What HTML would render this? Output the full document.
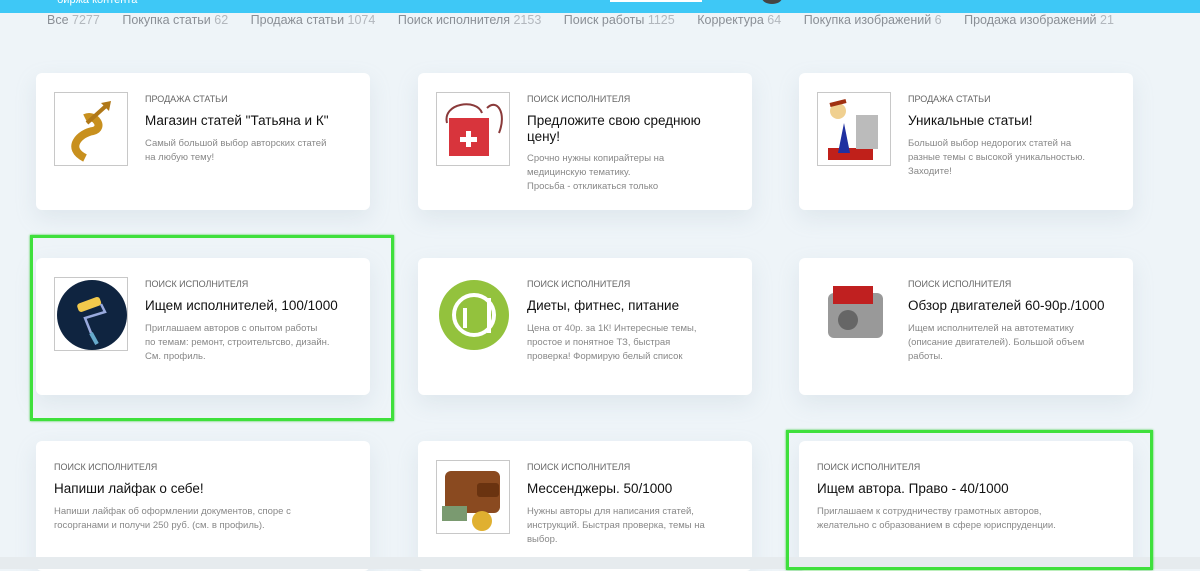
<!DOCTYPE html>
<html><head><meta charset="utf-8"><style>
*{margin:0;padding:0;box-sizing:border-box}
body{width:1200px;height:569px;overflow:hidden;background:#eef4f8;font-family:"Liberation Sans","DejaVu Sans",sans-serif;position:relative}
.top{position:absolute;left:0;top:0;width:1200px;height:13px;background:#3ec8f6}
.nav{position:absolute;top:13px;left:47px;font-size:12.5px;color:#8a8f96;white-space:nowrap}
.nav span{margin-right:22.5px}.nav b{font-weight:normal;color:#b2b7bd}
.card{position:absolute;width:334px;background:#fff;border-radius:6px;box-shadow:0 8px 22px rgba(150,170,190,.18)}
.img{position:absolute;left:18px;top:19px;width:74px;height:74px;border:1px solid #c8c8c8;background:#fff;overflow:hidden}
.t{position:absolute;left:109px;right:40px}
.cat{font-size:9px;color:#666;text-transform:uppercase;top:21px}
.ti{font-size:13.5px;color:#111;top:40px;line-height:16px;right:5px;white-space:nowrap}
.d{font-size:9.5px;color:#888;line-height:14px}
.g{position:absolute;border:3px solid #3fe03c;box-shadow:0 0 2px #3c3}
.bot{position:absolute;left:0;top:557px;width:1200px;height:12px;background:#e6ebee}
</style></head><body>
<div class="top"><span style="position:absolute;left:57px;top:-6px;color:#fff;font-size:11px">биржа контента</span><div style="position:absolute;left:610px;top:0;width:92px;height:2px;background:#fff"></div><div style="position:absolute;left:762px;top:-8px;width:20px;height:12px;border-radius:50%;background:#444"></div></div>
<div class="nav"><span>Все <b>7277</b></span><span>Покупка статьи <b>62</b></span><span>Продажа статьи <b>1074</b></span><span>Поиск исполнителя <b>2153</b></span><span>Поиск работы <b>1125</b></span><span>Корректура <b>64</b></span><span>Покупка изображений <b>6</b></span><span>Продажа изображений <b>21</b></span></div>

<div class="card" style="left:36px;top:73px;height:137px">
<div class="img"><svg width="74" height="74"><path d="M30 65 C10 55 25 40 38 38 C50 35 40 20 30 25" stroke="#c8901e" stroke-width="8" fill="none"/><path d="M32 30 L52 12" stroke="#b07818" stroke-width="4"/><path d="M46 10 L56 8 L54 18Z" fill="#b07818"/></svg></div>
<div class="t cat">Продажа статьи</div><div class="t ti">Магазин статей "Татьяна и К"</div><div class="t d" style="top:64px">Самый большой выбор авторских статей на любую тему!</div></div>

<div class="card" style="left:418px;top:73px;height:137px">
<div class="img"><svg width="74" height="74"><rect x="12" y="25" width="40" height="38" fill="#d8343c"/><rect x="29" y="38" width="5" height="16" fill="#fff"/><rect x="23" y="44" width="17" height="5" fill="#fff"/><path d="M10 30 C5 10 40 5 45 20 M50 15 C60 5 70 20 62 40" stroke="#8a3a3a" stroke-width="2" fill="none"/></svg></div>
<div class="t cat">Поиск исполнителя</div><div class="t ti">Предложите свою среднюю<br>цену!</div><div class="t d" style="top:79px">Срочно нужны копирайтеры на медицинскую тематику.<br>Просьба - откликаться только</div></div>

<div class="card" style="left:799px;top:73px;height:137px">
<div class="img"><svg width="74" height="74"><rect x="10" y="55" width="45" height="12" fill="#c0201a"/><rect x="38" y="22" width="22" height="34" fill="#bbb"/><path d="M20 60 L26 30 L32 60Z" fill="#2030a0"/><circle cx="20" cy="18" r="8" fill="#f0d090"/><path d="M12 12 L28 8" stroke="#a03010" stroke-width="4"/></svg></div>
<div class="t cat">Продажа статьи</div><div class="t ti">Уникальные статьи!</div><div class="t d" style="top:64px">Большой выбор недорогих статей на разные темы с высокой уникальностью. Заходите!</div></div>

<div class="card" style="left:36px;top:258px;height:137px">
<div class="img"><svg width="74" height="74"><circle cx="37" cy="37" r="35" fill="#0f2440"/><rect x="22" y="22" width="24" height="9" rx="3" fill="#f2c94c" transform="rotate(-20 34 26)"/><path d="M46 26 L50 34 L30 40 L36 55" stroke="#9ad" stroke-width="2.5" fill="none"/><path d="M36 55 L42 66" stroke="#6ac" stroke-width="4"/></svg></div>
<div class="t cat">Поиск исполнителя</div><div class="t ti">Ищем исполнителей, 100/1000</div><div class="t d" style="top:64px">Приглашаем авторов с опытом работы по темам: ремонт, строительтсво, дизайн. См. профиль.</div></div>

<div class="card" style="left:418px;top:258px;height:137px">
<div class="img" style="border-color:#fff"><svg width="74" height="74"><circle cx="37" cy="37" r="35" fill="#93c23d"/><circle cx="37" cy="37" r="20" fill="none" stroke="#fff" stroke-width="4"/><path d="M52 20 V55 M28 30 V50" stroke="#fff" stroke-width="4"/></svg></div>
<div class="t cat">Поиск исполнителя</div><div class="t ti">Диеты, фитнес, питание</div><div class="t d" style="top:64px">Цена от 40р. за 1К! Интересные темы, простое и понятное ТЗ, быстрая проверка! Формирую белый список</div></div>

<div class="card" style="left:799px;top:258px;height:137px">
<div class="img" style="border-color:#fff"><svg width="74" height="74"><rect x="10" y="15" width="55" height="45" rx="6" fill="#999"/><rect x="15" y="8" width="40" height="18" fill="#c02020"/><circle cx="30" cy="42" r="10" fill="#666"/></svg></div>
<div class="t cat">Поиск исполнителя</div><div class="t ti">Обзор двигателей 60-90р./1000</div><div class="t d" style="top:64px">Ищем исполнителей на автотематику (описание двигателей). Большой объем работы.</div></div>

<div class="card" style="left:36px;top:441px;height:130px">
<div class="t cat" style="left:18px">Поиск исполнителя</div><div class="t ti" style="left:18px">Напиши лайфак о себе!</div><div class="t d" style="left:18px;right:45px;top:64px">Напиши лайфак об оформлении документов, споре с госорганами и получи 250 руб. (см. в профиль).</div></div>

<div class="card" style="left:418px;top:441px;height:130px">
<div class="img"><svg width="74" height="74"><rect x="8" y="10" width="55" height="42" rx="6" fill="#8a4a20"/><rect x="40" y="22" width="22" height="14" rx="3" fill="#6a3310"/><circle cx="45" cy="60" r="10" fill="#e0b030"/><rect x="5" y="45" width="25" height="15" fill="#7a9a70"/></svg></div>
<div class="t cat">Поиск исполнителя</div><div class="t ti">Мессенджеры. 50/1000</div><div class="t d" style="top:64px">Нужны авторы для написания статей, инструкций. Быстрая проверка, темы на выбор.</div></div>

<div class="card" style="left:799px;top:441px;height:130px">
<div class="t cat" style="left:18px">Поиск исполнителя</div><div class="t ti" style="left:18px">Ищем автора. Право - 40/1000</div><div class="t d" style="left:18px;top:64px;right:50px">Приглашаем к сотрудничеству грамотных авторов, желательно с образованием в сфере юриспруденции.</div></div>

<div class="bot"></div>
<div class="g" style="left:30px;top:235px;width:364px;height:186px"></div>
<div class="g" style="left:786px;top:430px;width:367px;height:140px"></div>
</body></html>
